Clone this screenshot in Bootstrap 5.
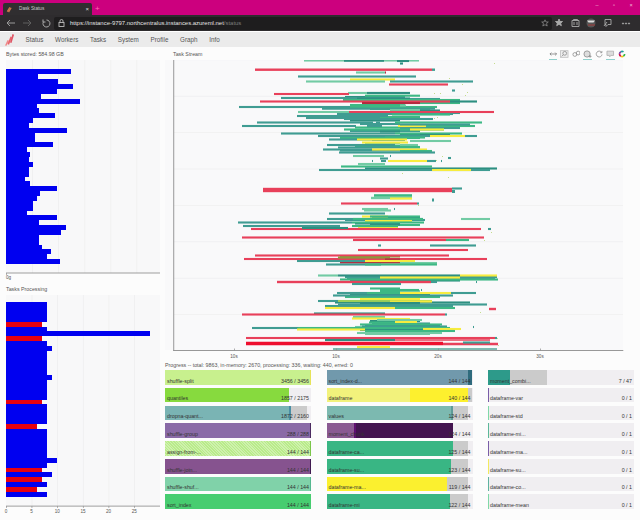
<!DOCTYPE html>
<html lang="en">

<head>
    <meta charset="UTF-8">
    <meta name="viewport" content="width=device-width, initial-scale=1.0">
    <title>Dask Status</title>
    <link href="https://cdn.jsdelivr.net/npm/bootstrap@5.3.2/dist/css/bootstrap.min.css" rel="stylesheet">
    <style>
        html, body { height: 520px; overflow: hidden; }
        body { background: #fcfcfc; font-family: "Liberation Sans", Arial, sans-serif; color: #444; }
        svg { display: block; }
        .tabbar { height: 15px; background: #cc007e; }
        .tabitem { width: 89px; height: 12px; margin: 3px 0 0 3px; background: #302e30; border-radius: 2px 2px 0 0; color: #ccc; font-size: 4.7px; padding: 0 3px; }
        .tabtext { margin-left: 7px; }
        .tabclose { font-size: 6px; color: #ddd; }
        .tabplus { color: #ff6ab5; font-size: 8px; line-height: 12px; margin: 3px 0 0 3px; }
        .winbtns { gap: 13px; padding-right: 7px; padding-top: 3px; color: #f3b8d8; font-size: 5.5px; line-height: 5px; }
        .winbtns span { width: 4px; text-align: center; }
        .urlbar { height: 17px; background: #2e2c2e; padding: 0 4px; border-bottom: 1px solid #fff; }
        .urlfield { width: 498px; height: 13px; background: #1e1d1e; font-size: 5.95px; color: #e4e4e4; border-radius: 2px; padding: 0 3px 0 4px; }
        .urlfield span { color: #7d7d7d; }
        .lockicon { margin-right: 5px; }
        .browsericons { margin-left: 2px; }
        .dasknav { height: 15px; background: #ebebeb; padding: 0; justify-content: flex-start; }
        .navbar-expand .navbar-nav.navlinks .nav-link { font-size: 6.3px; color: #555; padding: 0; line-height: 15px; }
        .navlinks { gap: 11.7px; margin-left: 10.5px; }
        .mainarea { display: grid; grid-template-columns: 165px 475px; height: 473px; }
        .paneltitle { height: 13px; font-size: 5.3px; color: #555; padding: 4px 0 0 6px; line-height: 7px; }
        .paneltitle2 { padding-left: 8px; }
        .streamhead { height: 13px; }
        .bktools { gap: 3px; padding: 3px 14px 0 0; }
        .bktool { width: 8.5px; height: 10px; border-bottom: 1px solid transparent; }
        .bktool.on { border-bottom-color: #8fd0cc; }
        .progtitle { font-size: 5.3px; color: #555; line-height: 9px; height: 9px; }
        .progcols { display: grid; grid-template-columns: repeat(3, 146px); column-gap: 15.5px; }
        .progstack { display: grid; row-gap: 3.1px; }
        .pbar { position: relative; height: 14.7px; background: #f0eef1; display: flex; overflow: hidden; }
        .pbar i { display: block; height: 100%; flex: none; }
        .pbar i.hatch { background-image: repeating-linear-gradient(45deg, transparent 0 1px, rgba(255, 255, 255, .3) 1px 2px); }
        .plabel, .pcount { position: absolute; bottom: 0; font-size: 5.3px; line-height: 7px; color: #333; }
        .plabel { left: 2px; }
        .pcount { right: 2px; }
        .axistxt { font: 4.6px "Liberation Sans", Arial, sans-serif; fill: #555; }
    </style>
</head>

<body>
    <div class="d-flex justify-content-between tabbar">
        <div class="d-flex">
            <div class="d-flex align-items-center tabitem">
                <svg width="6" height="7" viewBox="0 0 14 16"><path d="M3 13 9 3M6 14 12 4" stroke="#c9764a" stroke-width="3" fill="none" /></svg>
                <span class="tabtext flex-grow-1">Dask Status</span>
                <span class="tabclose">×</span>
            </div>
            <div class="tabplus">+</div>
        </div>
        <div class="d-flex winbtns">
            <span>–</span><span>▫</span><span>×</span>
        </div>
    </div>
    <div class="d-flex align-items-center urlbar">
        <svg width="50" height="12" viewBox="0 0 50 12" fill="none" stroke-width="1">
            <path d="M3 6h8M6 3 3 6l3 3" stroke="#999" />
            <path d="M19 6h8M24 3l3 3-3 3" stroke="#5f5f5f" />
            <path d="M42.5 3a3.500 3.500 0 1 1-3.200 2M39 2.500v2.500h2.500" stroke="#aaa" />
        </svg>
        <div class="d-flex align-items-center urlfield">
            <svg class="lockicon" width="7" height="8" viewBox="0 0 7 8" fill="none" stroke="#bbb" stroke-width=".9"><rect x="1" y="3.500" width="5" height="4" /><path d="M2 3.500V2a1.500 1.500 0 0 1 3 0v1.500" /></svg>
            <div class="flex-grow-1">https://instance-9797.northcentralus.instances.azureml.net<span>/status</span></div>
            <svg width="8" height="8" viewBox="0 0 8 8" fill="none" stroke="#888" stroke-width=".8"><path d="M4 .8 5 3h2.300L5.500 4.600l.7 2.400L4 5.700 1.800 7l.7-2.400L.7 3H3z" /></svg>
        </div>
        <svg class="browsericons" width="80" height="12" viewBox="0 0 80 12" fill="none" stroke="#aaa" stroke-width=".9">
            <path d="M5 2 6 4.500h2.500L6.700 6.200l.7 2.500L5 7.300 2.700 8.700l.6-2.500L1.500 4.500H4z" fill="#aaa" />
            <path d="M18 3.500h7v6h-7zM19.500 3.500v-1h4v1M20 5v3M23 5v3" />
            <circle cx="37" cy="6" r="4.500" fill="#555" stroke="none" />
            <path d="M33 3.500h8l-1.500 2h-5z" fill="#ddd" stroke="none" />
            <path d="M34 8h7" stroke="#a33" />
            <path d="M51 2.500h6v5h-3l-2 2v-2h-1zM50 9l3-4" />
            <circle cx="69" cy="6.500" r=".6" fill="#aaa" />
            <circle cx="72" cy="6.500" r=".6" fill="#aaa" />
            <circle cx="75" cy="6.500" r=".6" fill="#aaa" />
        </svg>
    </div>
    <nav class="navbar navbar-expand dasknav">
        <svg class="ms-1" width="11" height="13" viewBox="0 0 11 13">
            <path d="M1 12.500 3.500 7l1.500.8-2.500 5z" fill="#f08a8a" />
            <path d="M3.500 11 6.500 3.500l1.500.8-3 7.400z" fill="#e8626a" />
            <path d="M6 9.500 8.500 1l1.600.8-2.600 8.300z" fill="#e05565" />
        </svg>
        <div class="navbar-nav navlinks">
            <a class="nav-link" href="#">Status</a>
            <a class="nav-link" href="#">Workers</a>
            <a class="nav-link" href="#">Tasks</a>
            <a class="nav-link" href="#">System</a>
            <a class="nav-link" href="#">Profile</a>
            <a class="nav-link" href="#">Graph</a>
            <a class="nav-link" href="#">Info</a>
        </div>
    </nav>
    <div class="mainarea">
        <div>
            <div class="paneltitle">Bytes stored: 584.98 GB</div>
            <svg id="bytes" width="165" height="222" viewBox="0 60 165 222"></svg>
            <div class="paneltitle">Tasks Processing</div>
            <svg id="procs" width="165" height="225" viewBox="0 295 165 225"></svg>
        </div>
        <div>
            <div class="d-flex justify-content-between streamhead">
                <div class="paneltitle paneltitle2">Task Stream</div>
                <div class="d-flex bktools">
                    <div class="bktool on"><svg width="8.500" height="8" viewBox="0 0 9 8" fill="none" stroke="#777" stroke-width=".8"><path d="M1 4h7M2.500 2.500 1 4l1.500 1.500M6.500 2.500 8 4 6.500 5.500" /></svg></div>
                    <div class="bktool"><svg width="8.500" height="8" viewBox="0 0 9 8" fill="none" stroke="#888" stroke-width=".8"><rect x=".5" y=".5" width="8" height="7" fill="#eee" stroke="#bbb" /><circle cx="5" cy="3.300" r="2" /><path d="M3.500 4.800 1.800 6.500" /></svg></div>
                    <div class="bktool"><svg width="8.500" height="8" viewBox="0 0 9 8" fill="none" stroke="#888" stroke-width=".8"><circle cx="3" cy="4.500" r="2" /><circle cx="6.500" cy="3" r="2" /></svg></div>
                    <div class="bktool on"><svg width="8.500" height="8" viewBox="0 0 9 8" fill="none" stroke="#888" stroke-width=".8"><circle cx="4.300" cy="4" r="3.300" fill="#ddd" /><path d="M6 6.500h3M7.500 5v3" /></svg></div>
                    <div class="bktool"><svg width="8.500" height="8" viewBox="0 0 9 8" fill="none" stroke="#888" stroke-width=".8"><path d="M7 2.300A3.100 3.100 0 1 0 7.500 4.500M7.300 .8v1.800H5.500" /></svg></div>
                    <div class="bktool on"><svg width="8.500" height="8" viewBox="0 0 9 8" fill="#ddd" stroke="#aaa" stroke-width=".8"><path d="M1 1h7v4.500H5L4 7 3.500 5.500H1z" /></svg></div>
                    <div class="bktool"><svg width="8.500" height="8" viewBox="0 0 9 8" fill="none" stroke-width="1.800"><circle cx="4.300" cy="4" r="2.700" stroke="#39b54a" stroke-dasharray="2.800 14" /><circle cx="4.300" cy="4" r="2.700" stroke="#f4c20d" stroke-dasharray="2.800 14" stroke-dashoffset="-2.800" /><circle cx="4.300" cy="4" r="2.700" stroke="#d5114e" stroke-dasharray="2.800 14" stroke-dashoffset="-5.600" /><circle cx="4.300" cy="4" r="2.700" stroke="#7b3fa0" stroke-dasharray="2.800 14" stroke-dashoffset="-8.400" /><circle cx="4.300" cy="4" r="2.700" stroke="#1d9e9a" stroke-dasharray="2.800 14" stroke-dashoffset="-11.200" /></svg></div>
                </div>
            </div>
            <svg id="stream" width="475" height="301" viewBox="165 60 475 301"></svg>
            <div class="progtitle">Progress -- total: 9863, in-memory: 2670, processing: 336, waiting: 440, erred: 0</div>
            <div class="progcols" id="progress"></div>
        </div>
    </div>

    <script src="https://cdn.jsdelivr.net/npm/bootstrap@5.3.2/dist/js/bootstrap.bundle.min.js"></script>
    <script>
        function rect(x, y, w, h, c, crisp) {
            return `<rect x="${x}" y="${y}" width="${w}" height="${h}" fill="${c}"${crisp ? ' shape-rendering="crispEdges"' : ''}/>`;
        }

        // bytes stored: bar ends in zoomed (3x) px
        const byteEnds = [214, 113, 175, 220, 170, 123, 239, 110, 117, 166, 100, 87, 200, 106, 106, 158, 82, 91, 88, 98, 87, 88, 75, 90, 170, 120, 112, 100, 100, 82, 170, 117, 197, 183, 118, 118, 127, 154, 142, 181];
        let s = rect(6, 60, 154, 213, '#f8f8f9');
        [32, 58, 84.5, 110.5, 136.5].forEach(x => s += rect(x, 60, .7, 213, '#ededee'));
        byteEnds.forEach((e, i) => s += rect(6, 69.3 + i * 4.87, e / 3 - 6, 5, '#0000f0', true));
        s += rect(6, 272.6, 154, .8, '#888') + rect(6, 273, .6, 2, '#888');
        s += '<text class="axistxt" x="6" y="279">0g</text>';
        document.getElementById('bytes').innerHTML = s;

        // tasks processing, runs of [count, nprocessing] rows
        const procRows = [];
        [[4, 8], [1, -7], [1, 8], [1, 28], [1, -7], [1, 8], [1, 9], [5, 8], [1, 9], [4, 8], [1, -7], [4, 8], [1, -6], [6, 8], [1, 10], [1, 8], [1, -7], [1, 9], [1, -7], [1, 8], [1, -6], [1, 8]].forEach(r => {
            for (let i = 0; i < r[0]; i++) procRows.push(r[1]);
        });
        s = rect(6, 295, 154, 211, '#f8f8f9');
        [5, 10, 15, 20, 25].forEach(t => s += rect(6 + t * 5.13, 295, .7, 211, '#ededee'));
        procRows.forEach((v, i) => s += rect(6, 302.3 + i * 4.86, Math.abs(v) * 5.13, 5, v < 0 ? '#e8000f' : '#0000f0', true));
        s += rect(6, 505.7, 154, .8, '#888');
        [0, 5, 10, 15, 20, 25].forEach(t => {
            s += rect(6 + t * 5.13, 506, .6, 2, '#888');
            s += `<text class="axistxt" text-anchor="middle" x="${6 + t * 5.13}" y="513">${t}</text>`;
        });
        document.getElementById('procs').innerHTML = s;

        // task stream bars: y, x1, x2, colour, height
        const R = '#e8405a', T = '#3f9c92', G = '#3db884', Y = '#f7ec3f', L = '#72cba4', D = '#2d8f80', B = '#ee0f2e', K = '#b52a3e', O = '#8a9a3c';
        const backfill = [
            [97, 345, 405, D], [99, 360, 440, T], [103, 390, 460, G], [105, 350, 405, G], [109, 370, 430, G], [110.5, 400, 440, D], [113, 395, 460, T], [117, 345, 420, G], [120.5, 350, 400, D],
            [124, 360, 400, T], [127.5, 355, 420, G], [128, 400, 460, T], [131, 350, 420, T], [134.5, 400, 445, D], [138, 340, 420, G], [140, 372, 405, T], [143.5, 365, 400, L], [146, 355, 400, G], [150.5, 340, 400, T],
            [218, 372, 420, D], [220, 345, 425, T], [223.5, 355, 400, D], [225, 370, 420, G], [227, 358, 398, Y],
            [256.5, 340, 400, O], [260, 335, 400, O], [262.5, 340, 405, K], [276.5, 345, 480, G], [277, 345, 497, T], [280.5, 350, 460, D],
            [288.5, 370, 400, G], [291, 385, 420, L], [294, 350, 430, D], [297, 345, 440, G], [299, 360, 420, Y], [302.5, 335, 470, D], [305, 340, 450, G], [307, 360, 420, D],
            [319, 380, 410, Y], [321, 370, 420, D], [323.5, 372, 430, T], [325.5, 365, 440, D], [327, 355, 445, L], [330, 360, 450, D], [332, 370, 442, G], [334, 365, 430, L]
        ];
        const stream = [
            [60.5, 304, 419, L], [60.7, 344, 384, D], [61, 397, 409, D], [63.5, 400, 403, D],
            [69.7, 255, 432, R, 2.4], [69.7, 432, 435, T, 2.4],
            [72.5, 356, 385, L], [72.5, 385, 386, K],
            [76.5, 298, 416, T], [79.5, 350, 395, Y], [81.5, 306, 385, L], [81.5, 390, 473, T],
            [84.5, 389, 448, R], [90.5, 452, 455, T],
            [93, 348, 410, L], [94, 274, 349, R], [93, 367, 410, D], [95.7, 365, 420, G],
            [98, 281, 405, T], [98.5, 357, 410, D], [100, 343, 460, G], [101.5, 260, 450, R], [101.5, 450, 477, D], [103, 362, 420, K],
            [107, 239, 350, T], [107, 350, 437, G], [105.5, 400, 406, L], [108.7, 322, 435, T], [110, 390, 420, L],
            [112, 298, 350, L], [112, 349, 494, R], [114, 337, 453, T], [114.5, 392, 450, G], [116, 297, 388, T], [118, 306, 380, T], [119, 344, 433, T],
            [122.5, 257, 373, T], [122.5, 376, 380, T], [122.5, 395, 482, G], [126, 242, 356, T], [126, 367, 382, T], [126, 398, 426, Y], [126, 426, 475, G], [124.5, 400, 470, T],
            [129.5, 344, 444, G], [129.5, 410, 444, Y], [131.5, 380, 400, D],
            [133.5, 281, 395, T], [133.5, 395, 462, G], [135, 420, 450, D], [136, 318, 430, T], [136, 430, 465, Y], [136, 465, 477, T], [137.5, 385, 425, G],
            [139.5, 329, 372, T], [139.5, 357, 407, Y], [141, 410, 451, L], [142.5, 362, 408, Y],
            [145, 327, 395, T], [145, 400, 418, L], [147.5, 338, 420, T], [147, 400, 420, G], [149.5, 323, 372, T], [149.5, 372, 427, Y], [151, 400, 432, G], [152.5, 339, 435, T],
            [156, 353, 384, L], [156, 390, 391, T], [158.5, 380, 388, T], [161, 388, 427, Y], [161, 427, 436, T], [161, 441, 442, T], [161, 372, 373, T], [161, 381, 386, T], [158, 448, 451, T],
            [164, 358, 385, L], [166.5, 341, 432, G], [168.5, 365, 497, D], [170, 319, 490, T], [170, 432, 471, Y],
            [190, 263, 452, R, 4.4], [188.5, 452, 462, T], [191.5, 452, 455, T, 3],
            [195.5, 374, 412, G, 2.6], [198, 371, 412, L, 2.4], [198.5, 390, 412, Y], [200, 432, 434, T, 3],
            [203.5, 341, 417, R], [203.5, 417, 419, T],
            [209, 362, 388, L], [209, 394, 395, T], [210.5, 364, 391, L], [213.5, 329, 385, T], [216.5, 362, 388, Y], [216.5, 370, 420, G], [219, 327, 423, T], [219, 353, 423, G], [219, 461, 490, L], [221, 365, 412, Y],
            [222.5, 238, 352, T], [222.5, 352, 424, G], [224.5, 370, 400, D], [226, 243, 340, T], [226, 352, 398, G], [229, 251, 481, R], [228, 302, 348, D], [229, 488, 491, T],
            [237.5, 242, 484, R], [240, 353, 446, R], [240, 446, 469, G], [245.5, 378, 381, T], [245.5, 430, 476, T], [250, 358, 468, R],
            [255.5, 255, 449, R], [259, 244, 487, R], [257.5, 338, 390, O], [259.5, 385, 400, K], [261, 297, 405, T], [261, 365, 415, Y], [263, 400, 437, L], [264.5, 326, 381, T], [264.5, 365, 437, G],
            [275.5, 318, 338, L], [275.5, 338, 460, D], [275.5, 460, 497, Y], [278, 347, 495, T], [279.5, 340, 498, G], [277.5, 380, 460, Y], [282, 277, 431, R, 2.4], [282, 431, 437, T], [282, 476, 477, T], [284, 352, 401, T],
            [290, 380, 419, G], [290, 421, 422, T], [293, 337, 367, T], [293, 367, 400, G], [293, 400, 451, Y], [293, 451, 476, T], [295.5, 333, 453, T], [291.5, 380, 400, G],
            [301, 318, 338, T], [301, 338, 432, '#9ccf5a'], [301.5, 390, 432, Y], [304.5, 338, 487, T], [306, 325, 453, T], [303, 360, 420, D], [308, 325, 395, Y], [308, 395, 455, G], [309, 489, 496, R, 2.4],
            [313.5, 314, 385, D], [314.5, 242, 445, R], [314.5, 445, 447, T], [317, 353, 385, L], [318.5, 352, 385, Y],
            [320, 377, 422, L], [322.5, 369, 417, G], [322, 395, 417, Y], [324.5, 360, 442, G], [326.5, 362, 447, T], [327, 473, 474, T],
            [328, 252, 298, T], [328, 298, 450, G], [329.5, 297, 365, Y], [329, 423, 461, Y], [331, 365, 455, G], [333, 357, 442, L],
            [338, 246, 495, R], [338, 495, 497, T], [340, 325, 395, D], [340, 395, 490, R, 1.5],
            [343.5, 246, 443, B, 3.5], [344, 443, 498, R, 2.5], [342.5, 463, 490, T], [347, 357, 390, Y], [349, 333, 497, D, 1.2]
        ];
        const specks = [[494, 63], [449, 78], [462, 84], [440, 93], [467, 92], [465, 95], [434, 93], [434, 118], [437, 117], [442, 156], [436, 160], [402, 173], [448, 177], [418, 205], [491, 232], [484, 240], [497, 338], [498, 345], [480, 312]];
        s = rect(165, 60, 458, 290, '#f9f9fa');
        for (let y = 59.5; y < 340; y += 36.4) s += rect(174, y, 449, .6, '#ececed');
        backfill.concat(stream).forEach(b => s += rect(b[1], b[0] - (b[4] || 2.1) / 2, b[2] - b[1], b[4] || 2.1, b[3]));
        specks.forEach(p => s += rect(p[0], p[1], 1, 1, '#c4dc8c'));
        s += rect(173.3, 60, .9, 291, '#8d8d8d') + rect(173.3, 350, 450, .9, '#8d8d8d');
        [[234, '10s'], [336, '10s'], [438, '20s'], [540, '30s']].forEach(t => {
            s += rect(t[0], 348.5, .7, 2, '#8d8d8d');
            s += `<text class="axistxt" text-anchor="middle" x="${t[0]}" y="358">${t[1]}</text>`;
        });
        document.getElementById('stream').innerHTML = s;

        // progress rows: label, count, [width %, colour, class] segments
        const GY = '#cbcbcb';
        const progress = [[
            ['shuffle-split', '3456 / 3456', [[99.2, '#c8f08e'], [.8, '#e6e35a']]],
            ['quantiles', '1857 / 2175', [[85, '#87da3e']]],
            ['dropna-quant...', '1872 / 2160', [[85, '#7ab4b4'], [1.5, '#4a8fa5'], [10.5, GY]]],
            ['shuffle-group', '288 / 288', [[99, '#8a6ba7'], [1, '#4a2a60']]],
            ['assign-from-...', '144 / 144', [[99.2, '#b9eb8a', 'hatch'], [.8, '#7bc64a']]],
            ['shuffle-join...', '144 / 144', [[99, '#86538f'], [1, '#3f1a50']]],
            ['shuffle-shuf...', '144 / 144', [[99.2, '#80d2a9'], [.8, '#55b890']]],
            ['sort_index', '144 / 144', [[100, '#47cd70']]]
        ], [
            ['sort_index-d...', '144 / 144', [[97, '#7199ac'], [3, '#2f6b7d']]],
            ['dataframe', '140 / 144', [[57, '#f2f27c'], [40, '#fdf02e'], [3, GY]]],
            ['values', '124 / 144', [[85.5, '#7cb9b0'], [1, '#5e9b98'], [10.5, GY]]],
            ['moment_chunk', '124 / 144', [[19, '#8a5a92'], [1, '#5f0f70'], [66.5, '#43144f']]],
            ['dataframe-ca...', '125 / 144', [[86.5, '#39b684'], [10.5, GY]]],
            ['dataframe-su...', '123 / 144', [[85.5, '#39b684'], [11.5, GY]]],
            ['dataframe-ma...', '119 / 144', [[82.5, '#fbf02f'], [14.5, GY]]],
            ['dataframe-mi', '122 / 144', [[84.5, '#39b684'], [12.5, GY]]]
        ], [
            ['moment_combi...', '7 / 47', [[15.2, '#2d9a8a'], [25.3, GY]]],
            ['dataframe-var', '0 / 1', [[.8, '#7a5ea8']]],
            ['dataframe-std', '0 / 1', [[.8, '#80d8a8']]],
            ['dataframe-mi...', '0 / 1', [[.8, '#5cb89a']]],
            ['dataframe-ma...', '0 / 1', [[.8, '#7a5ea8']]],
            ['dataframe-su...', '0 / 1', [[.8, '#f2ea60']]],
            ['dataframe-co...', '0 / 1', [[.8, '#5fb3a0']]],
            ['dataframe-mean', '0 / 1', [[.8, '#80d8a8']]]
        ]];
        document.getElementById('progress').innerHTML = progress.map(col => '<div class="progstack">' + col.map(r =>
            `<div class="pbar">${r[2].map(g => `<i class="${g[2] || ''}" style="width:${g[0]}%;background-color:${g[1]}"></i>`).join('')}` +
            `<span class="plabel">${r[0]}</span><span class="pcount">${r[1]}</span></div>`).join('') + '</div>').join('');
    </script>
</body>

</html>
